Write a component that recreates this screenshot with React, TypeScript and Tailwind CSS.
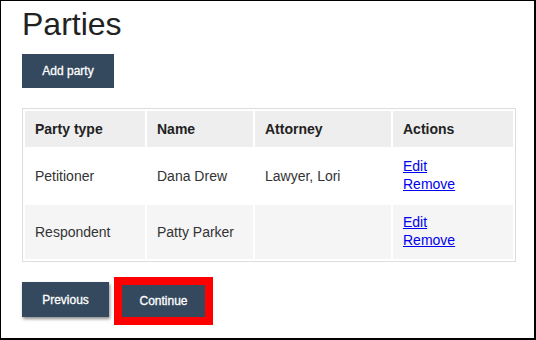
import React from "react"

const rows = [
  { type: "Petitioner", name: "Dana Drew", attorney: "Lawyer, Lori", bg: "bg-white" },
  { type: "Respondent", name: "Patty Parker", attorney: "", bg: "bg-[#f5f5f5]" },
]

function Btn({ children, className = "" }: { children: React.ReactNode; className?: string }) {
  return (
    <button
      type="button"
      className={`bg-[#34495e] text-white text-[12px] leading-[14px] [-webkit-text-stroke:0.3px_white] ${className}`}
    >
      {children}
    </button>
  )
}

export default function App() {
  return (
    <div
      className="box-border h-[340px] w-[536px] overflow-hidden border-t border-l border-r-2 border-b-2 border-black bg-white pl-[21px] pt-[5px] text-[#333]"
      style={{ fontFamily: '"Liberation Sans", Arial, sans-serif' }}
    >
      <h1 className="text-[32px] leading-[36px] font-normal text-[#222]">Parties</h1>

      <Btn className="mt-[12px] h-[34px] w-[92px]">Add party</Btn>

      <table className="mt-[20px] w-[494px] table-fixed border-separate border-spacing-[2px] border border-[#ddd] text-[14px]">
        <colgroup>
          <col className="w-[120px]" />
          <col className="w-[106px]" />
          <col className="w-[136px]" />
          <col className="w-[120px]" />
        </colgroup>
        <thead>
          <tr className="bg-[#eeeeee] text-left font-bold text-[#222]">
            <th className="px-[10px] py-[10px] leading-[16px]">Party type</th>
            <th className="px-[10px] py-[10px] leading-[16px]">Name</th>
            <th className="px-[10px] py-[10px] leading-[16px]">Attorney</th>
            <th className="px-[10px] py-[10px] leading-[16px]">Actions</th>
          </tr>
        </thead>
        <tbody>
          {rows.map((r) => (
            <tr key={r.type} className={r.bg}>
              <td className="px-[10px] leading-[18px]">{r.type}</td>
              <td className="px-[10px] leading-[18px]">{r.name}</td>
              <td className="px-[10px] leading-[18px]">{r.attorney}</td>
              <td className="px-[10px] pt-[8px] pb-[10px] leading-[18px]">
                <a href="#" className="block w-fit text-[#0000ee] underline">Edit</a>
                <a href="#" className="block w-fit text-[#0000ee] underline">Remove</a>
              </td>
            </tr>
          ))}
        </tbody>
      </table>

      <div className="mt-[20px] flex items-end gap-[13px]">
        <Btn className="h-[35px] w-[87px] shadow-[1px_2px_3px_rgba(0,0,0,0.45)]">Previous</Btn>
        <Btn className="h-[32px] w-[83px] outline-[8px] outline-solid outline-[#ff0000]">Continue</Btn>
      </div>
    </div>
  )
}
